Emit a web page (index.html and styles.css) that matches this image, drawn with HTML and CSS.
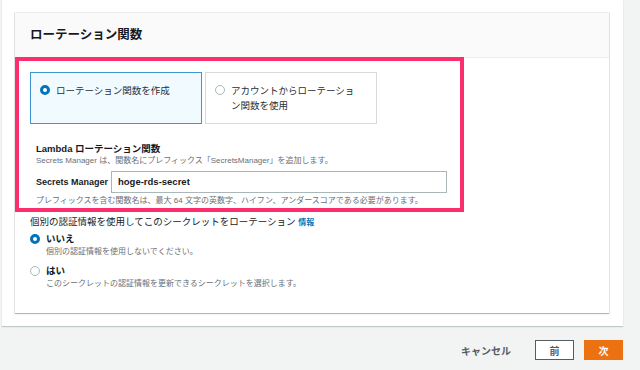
FILE: index.html
```html
<!DOCTYPE html>
<html lang="ja">
<head>
<meta charset="utf-8">
<link rel="stylesheet" href="styles.css">
</head>
<body>
<div class="panel">
  <div class="card">
    <div class="card-header">ローテーション関数</div>
    <div class="card-body">
      <div class="tiles">
        <div class="tile selected"><span class="radio on"></span><span class="tile-text">ローテーション関数を作成</span></div>
        <div class="tile"><span class="radio"></span><span class="tile-text">アカウントからローテーション関数を使用</span></div>
      </div>
      <div class="lambda">
        <div class="label">Lambda ローテーション関数</div>
        <div class="desc">Secrets Manager は、関数名にプレフィックス「SecretsManager」を追加します。</div>
        <div class="input-row">
          <span class="prefix">Secrets Manager</span>
          <div class="input">hoge-rds-secret</div>
        </div>
        <div class="desc hint">プレフィックスを含む関数名は、最大 64 文字の英数字、ハイフン、アンダースコアである必要があります。</div>
      </div>
      <div class="question">個別の認証情報を使用してこのシークレットをローテーション <a class="info">情報</a></div>
      <div class="option">
        <span class="radio on"></span>
        <div><div class="opt-title">いいえ</div><div class="desc">個別の認証情報を使用しないでください。</div></div>
      </div>
      <div class="option">
        <span class="radio"></span>
        <div><div class="opt-title">はい</div><div class="desc">このシークレットの認証情報を更新できるシークレットを選択します。</div></div>
      </div>
      <div class="highlight"></div>
    </div>
  </div>
</div>
<div class="footer">
  <span class="cancel">キャンセル</span>
  <span class="btn">前</span>
  <span class="btn primary">次</span>
</div>
</body>
</html>
```

FILE: styles.css
```css
* { box-sizing: border-box; }
html, body { margin: 0; padding: 0; }
body {
  background: #f2f3f3;
  font-family: "Liberation Sans", "Noto Sans CJK JP", sans-serif;
  color: #16191f;
  width: 640px;
  height: 370px;
  overflow: hidden;
}
.panel {
  margin-left: 2px;
  width: 621px;
  height: 326px;
  background: #fff;
  padding: 13px 0 0 13px;
  box-shadow: 0 1px 1px rgba(0,28,36,0.2);
}
.card {
  width: 594px;
  height: 300px;
  background: #fff;
  box-shadow: 0 1px 1px rgba(0,28,36,0.25), 0 0 0 1px #eaeded;
}
.card-header {
  height: 45px;
  background: #fafafa;
  border-bottom: 1px solid #eaeded;
  padding: 14px 0 0 15px;
  font-size: 12.5px;
  font-weight: bold;
  line-height: 16px;
  color: #16191f;
}
.card-body {
  position: relative;
  padding: 14px 0 0 15px;
}
.tiles {
  display: flex;
  gap: 3px;
}
.tile {
  width: 172px;
  height: 52px;
  border: 1px solid #d5dbdb;
  background: #fff;
  display: flex;
  align-items: flex-start;
  gap: 6px;
  padding: 10px 19px 0 9px;
  font-size: 9.5px;
  line-height: 15px;
  color: #2a2e33;
}
.tile.selected {
  background: #f1faff;
  border-color: #3f96d3;
}
.tile-text { flex: 1; }
.radio {
  flex: none;
  width: 10px;
  height: 10px;
  border-radius: 50%;
  border: 1px solid #aab7b8;
  background: #fff;
  margin-top: 2px;
}
.radio.on {
  border: 3px solid #0073bb;
}
.lambda {
  padding: 19px 0 0 6px;
}
.label {
  font-size: 9.5px;
  font-weight: bold;
  line-height: 12px;
}
.desc {
  font-size: 8px;
  line-height: 11px;
  color: #687078;
}
.input-row {
  display: flex;
  align-items: center;
  margin-top: 5px;
  gap: 4px;
}
.prefix {
  width: 71px;
  font-size: 9px;
  font-weight: bold;
  color: #16191f;
  white-space: nowrap;
}
.input {
  width: 336px;
  height: 22px;
  border: 1px solid #aab7b8;
  padding: 0 6px;
  font-size: 9.5px;
  font-weight: bold;
  line-height: 20px;
}
.hint { margin-top: 2px; }
.question {
  margin-top: 9px;
  font-size: 9.5px;
  line-height: 13px;
}
.info {
  color: #0073bb;
  font-size: 8px;
  font-weight: bold;
}
.option {
  display: flex;
  gap: 6px;
  margin-top: 3px;
  padding-left: 0;
}
.option .radio { margin-top: 2px; }
.option + .option { margin-top: 6px; }
.opt-title {
  font-size: 9.5px;
  font-weight: bold;
  line-height: 14px;
}
.option .desc { line-height: 12px; }
.highlight {
  position: absolute;
  left: 0;
  top: -1px;
  width: 449px;
  height: 155px;
  border: 4px solid #fd2e6d;
  pointer-events: none;
}
.footer {
  display: flex;
  justify-content: flex-end;
  align-items: center;
  gap: 10px;
  padding: 14px 17px 0 0;
}
.cancel {
  font-size: 10px;
  font-weight: bold;
  color: #545b64;
  margin-right: 14px;
}
.btn {
  width: 39px;
  height: 20px;
  border: 1px solid #545b64;
  background: #fff;
  font-size: 10px;
  font-weight: bold;
  color: #545b64;
  display: flex;
  align-items: center;
  justify-content: center;
}
.btn.primary {
  background: #ec7211;
  border-color: #ec7211;
  color: #fff;
}
```
